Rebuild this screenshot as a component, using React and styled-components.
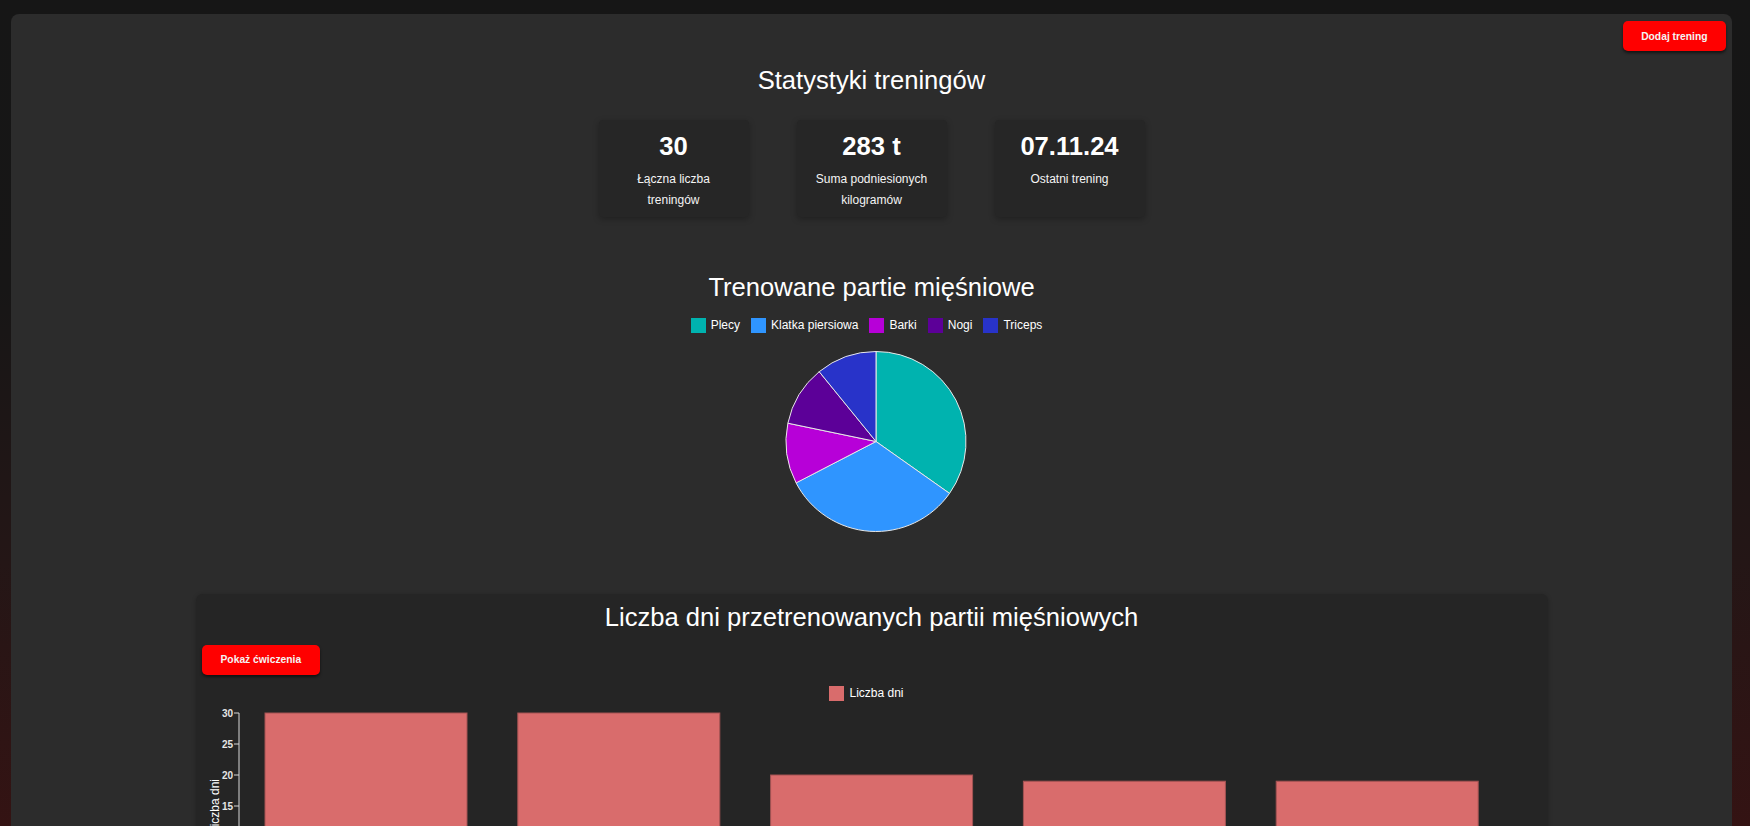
import React from 'react';
import styled, { createGlobalStyle } from 'styled-components';

const GlobalStyle = createGlobalStyle`
  html, body { margin: 0; padding: 0; }
  html { background: #161616; }
  body {
    font-family: "Liberation Sans", Arial, Helvetica, sans-serif;
    color: #fff;
    min-height: 100vh;
    background: linear-gradient(180deg, #161616 0%, #171616 35%, #241616 68%, #341313 100%);
    background-attachment: fixed;
  }
`;

const Panel = styled.main`
  margin: 14px 18px 0 11px;
  background: #2c2c2c;
  border-radius: 8px 8px 0 0;
  min-height: 1100px;
  display: flex;
  flex-direction: column;
  align-items: center;
`;

const TopBar = styled.div`
  align-self: stretch;
  display: flex;
  justify-content: flex-end;
  padding: 7px 6px 0;
`;

const RedButton = styled.button`
  height: 30px;
  padding: 0 ${p => p.$px || 19}px;
  border: none;
  border-radius: 5px;
  background: #ff0000;
  color: #f4f4f4;
  font-family: "Liberation Sans", Arial, sans-serif;
  font-weight: 700;
  font-size: 10.3px;
  box-shadow: 0 2px 3px rgba(0, 0, 0, 0.55);
  cursor: pointer;
`;

const Heading = styled.h2`
  margin: ${p => p.$mt || 0}px 0 0;
  font-size: 25.6px;
  line-height: 30px;
  font-weight: 400;
  color: #fff;
  text-align: center;
`;

const StatRow = styled.div`
  display: flex;
  gap: 48px;
  margin-top: 25px;
`;

const StatCard = styled.div`
  width: 150px;
  box-sizing: border-box;
  padding: 12px 16px 6px;
  background: #262626;
  border-radius: 4px;
  box-shadow: 0 2px 6px rgba(0, 0, 0, 0.28);
  text-align: center;
`;

const StatValue = styled.div`
  font-size: 25.6px;
  line-height: 29px;
  font-weight: 700;
  color: #fff;
`;

const StatLabel = styled.div`
  margin-top: 7.5px;
  font-size: 12px;
  line-height: 21px;
  color: #f4f4f4;
`;

const Legend = styled.ul`
  list-style: none;
  margin: ${p => p.$mt || 0}px 0 0;
  padding: 0;
  display: flex;
  justify-content: center;
  gap: 1px;
`;

const LegendItem = styled.li`
  display: flex;
  align-items: center;
  margin-right: 10px;
  font-size: 12px;
  line-height: 15px;
  color: #fff;
`;

const Swatch = styled.span`
  width: 15px;
  height: 15px;
  margin-right: 5px;
  background: ${p => p.$color};
`;

const PieSvg = styled.svg`
  display: block;
  width: 400px;
  height: 230px;
`;

const BarCard = styled.section`
  margin-top: 30.5px;
  width: 1352px;
  box-sizing: border-box;
  padding: 8px 6px 20px;
  background: #252525;
  border-radius: 7px;
  box-shadow: 0 1px 4px rgba(0, 0, 0, 0.25);
  display: flex;
  flex-direction: column;
  align-items: center;
`;

const ButtonRow = styled.div`
  align-self: stretch;
  display: flex;
  margin-top: 13px;
`;

const BarSvg = styled.svg`
  display: block;
  width: 1340px;
  height: 260px;
  align-self: flex-start;
`;

const pieData = [
  { name: 'Plecy', value: 16, color: '#00b3af' },
  { name: 'Klatka piersiowa', value: 15, color: '#2f95ff' },
  { name: 'Barki', value: 5, color: '#b700d8' },
  { name: 'Nogi', value: 5, color: '#5c0098' },
  { name: 'Triceps', value: 5, color: '#2833c9' },
];

const barData = [
  { name: 'Plecy', value: 30 },
  { name: 'Klatka piersiowa', value: 30 },
  { name: 'Barki', value: 20 },
  { name: 'Nogi', value: 19 },
  { name: 'Triceps', value: 19 },
];

const FONT = '"Liberation Sans", Arial, sans-serif';

function PieChart() {
  const cx = 204, cy = 108.5, r = 90;
  const total = pieData.reduce((s, d) => s + d.value, 0);
  let acc = 0;
  const pt = a => {
    const rad = (a * Math.PI) / 180;
    return [cx + r * Math.sin(rad), cy - r * Math.cos(rad)];
  };
  return (
    <PieSvg viewBox="0 0 400 230">
      {pieData.map(d => {
        const a0 = (acc / total) * 360;
        acc += d.value;
        const a1 = (acc / total) * 360;
        const [x0, y0] = pt(a0);
        const [x1, y1] = pt(a1);
        const large = a1 - a0 > 180 ? 1 : 0;
        return (
          <path
            key={d.name}
            d={`M${cx},${cy} L${x0},${y0} A${r},${r} 0 ${large} 1 ${x1},${y1} Z`}
            fill={d.color}
            stroke="#e8e8e8"
            strokeWidth="1"
          />
        );
      })}
    </PieSvg>
  );
}

function BarChart() {
  const axisX = 37;
  const top = 12;
  const unit = 6.2;
  const zero = top + 30 * unit;
  const step = 252.8;
  const barW = 202;
  const ticks = [0, 5, 10, 15, 20, 25, 30];
  const labelX = 14;
  const midY = (top + zero) / 2;
  return (
    <BarSvg viewBox="0 0 1340 260">
      {barData.map((d, i) => {
        const x = axisX + 26 + i * step;
        const h = d.value * unit;
        return (
          <rect
            key={d.name}
            x={x}
            y={zero - h}
            width={barW}
            height={h}
            fill="#d96c6c"
            stroke="#a35353"
            strokeWidth="1"
          />
        );
      })}
      <line x1={axisX} y1={top} x2={axisX} y2={zero} stroke="#d8d8d8" strokeWidth="1" />
      <line x1={axisX} y1={zero} x2={axisX + 5 * step + 4} y2={zero} stroke="#d8d8d8" strokeWidth="1" />
      {ticks.map(t => {
        const y = zero - t * unit;
        return (
          <g key={t}>
            <line x1={axisX - 5} y1={y} x2={axisX} y2={y} stroke="#d8d8d8" strokeWidth="1" />
            <text
              x={axisX - 6}
              y={y + 3.5}
              textAnchor="end"
              fontSize="10"
              fontWeight="700"
              fill="#e6e6e6"
              fontFamily={FONT}
            >
              {t}
            </text>
          </g>
        );
      })}
      {barData.map((d, i) => (
        <text
          key={d.name}
          x={axisX + 26 + i * step + barW / 2}
          y={zero + 16}
          textAnchor="middle"
          fontSize="10"
          fontWeight="700"
          fill="#e6e6e6"
          fontFamily={FONT}
        >
          {d.name}
        </text>
      ))}
      <text
        x={labelX}
        y={midY}
        transform={`rotate(-90 ${labelX} ${midY})`}
        textAnchor="middle"
        dominantBaseline="middle"
        fontSize="12"
        fill="#ffffff"
        fontFamily={FONT}
      >
        Liczba dni
      </text>
    </BarSvg>
  );
}

const stats = [
  { value: '30', label: 'Łączna liczba treningów' },
  { value: '283 t', label: 'Suma podniesionych kilogramów' },
  { value: '07.11.24', label: 'Ostatni trening' },
];

export default function App() {
  return (
    <>
      <GlobalStyle />
      <Panel>
        <TopBar>
          <RedButton $px={18.5}>Dodaj trening</RedButton>
        </TopBar>
        <Heading $mt={14}>Statystyki treningów</Heading>
        <StatRow>
          {stats.map(s => (
            <StatCard key={s.label}>
              <StatValue>{s.value}</StatValue>
              <StatLabel>{s.label}</StatLabel>
            </StatCard>
          ))}
        </StatRow>
        <Heading $mt={55}>Trenowane partie mięśniowe</Heading>
        <Legend $mt={16.5}>
          {pieData.map(d => (
            <LegendItem key={d.name}>
              <Swatch $color={d.color} />
              {d.name}
            </LegendItem>
          ))}
        </Legend>
        <PieChart />
        <BarCard>
          <Heading>Liczba dni przetrenowanych partii mięśniowych</Heading>
          <ButtonRow>
            <RedButton>Pokaż ćwiczenia</RedButton>
          </ButtonRow>
          <Legend $mt={11}>
            <LegendItem>
              <Swatch $color="#d96c6c" />
              Liczba dni
            </LegendItem>
          </Legend>
          <BarChart />
        </BarCard>
      </Panel>
    </>
  );
}
